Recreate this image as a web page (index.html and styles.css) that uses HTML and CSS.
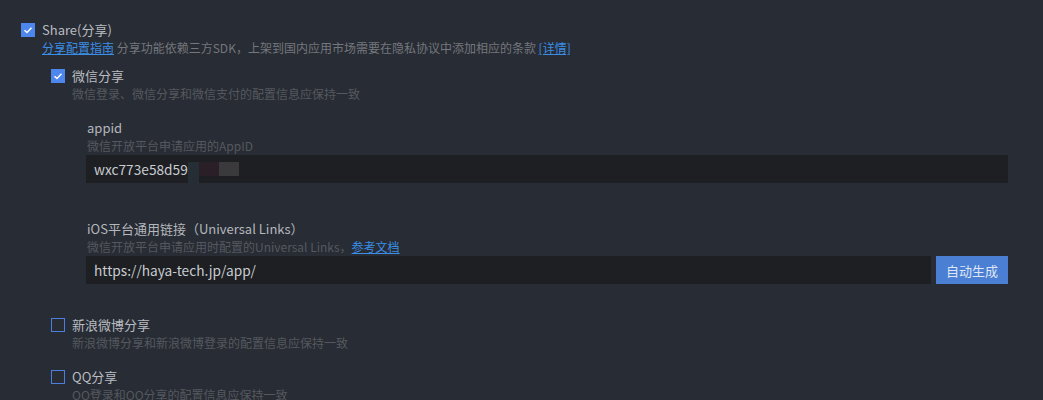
FILE: index.html
```html
<!DOCTYPE html>
<html lang="zh">
<head>
<meta charset="utf-8">
<link rel="stylesheet" href="styles.css">
</head>
<body>
<div class="page">
  <div class="check-row">
    <span class="cb checked"><svg viewBox="0 0 14 14" width="14" height="14"><path d="M3.5 7.2 L6 9.5 L10.5 4.8" fill="none" stroke="#fff" stroke-width="1.5"/></svg></span>
    <span class="label">Share(分享)</span>
  </div>
  <div class="subline"><a class="link">分享配置指南</a> <span class="note">分享功能依赖三方SDK，上架到国内应用市场需要在隐私协议中添加相应的条款</span> <a class="link">[详情]</a></div>

  <div class="group">
    <div class="check-row">
      <span class="cb checked"><svg viewBox="0 0 14 14" width="14" height="14"><path d="M3.5 7.2 L6 9.5 L10.5 4.8" fill="none" stroke="#fff" stroke-width="1.5"/></svg></span>
      <span class="label">微信分享</span>
    </div>
    <div class="desc indent">微信登录、微信分享和微信支付的配置信息应保持一致</div>

    <div class="fields">
      <div class="field">
        <div class="flabel">appid</div>
        <div class="desc">微信开放平台申请应用的AppID</div>
        <div class="input-row">
          <div class="input"><span>wxc773e58d59</span><span class="mask"><i class="m1"></i><i class="m2"></i><i class="m3"></i></span></div>
        </div>
      </div>
      <div class="field field2">
        <div class="flabel">iOS平台通用链接（Universal Links）</div>
        <div class="desc">微信开放平台申请应用时配置的Universal Links，<a class="link">参考文档</a></div>
        <div class="input-row">
          <div class="input">https://haya-tech.jp/app/</div>
          <button class="btn">自动生成</button>
        </div>
      </div>
    </div>

    <div class="check-row weibo">
      <span class="cb"></span>
      <span class="label">新浪微博分享</span>
    </div>
    <div class="desc indent">新浪微博分享和新浪微博登录的配置信息应保持一致</div>

    <div class="check-row qq">
      <span class="cb"></span>
      <span class="label">QQ分享</span>
    </div>
    <div class="desc indent">QQ登录和QQ分享的配置信息应保持一致</div>
  </div>
</div>
</body>
</html>
```
FILE: styles.css
```css
* { box-sizing: border-box; }
html, body { margin: 0; padding: 0; }
body {
  background: #282c34;
  font-family: "Noto Sans CJK SC", "Noto Sans", sans-serif;
  color: #b4b7bd;
  height: 400px;
  overflow: hidden;
}
.page {
  padding: 21px 35px 0 21px;
}
.check-row {
  display: flex;
  align-items: center;
  height: 18px;
  gap: 7px;
}
.cb {
  width: 14px;
  height: 14px;
  border: 1.5px solid #4a7fe0;
  display: inline-flex;
  flex: none;
}
.cb.checked {
  background: #4d86ec;
  border: none;
}
.label {
  font-size: 13px;
  line-height: 18px;
  color: #b9bcc1;
}
.subline {
  margin-left: 21px;
  font-size: 12px;
  line-height: 18px;
  white-space: nowrap;
}
.link {
  color: #3a8ee6;
  text-decoration: underline;
  cursor: pointer;
}
.note {
  color: #74777d;
}
.group {
  margin-left: 30px;
  margin-top: 10px;
}
.desc {
  font-size: 12px;
  line-height: 18px;
  color: #55595f;
  white-space: nowrap;
}
.desc.indent {
  margin-left: 21px;
}
.fields {
  margin-left: 35px;
  margin-top: 16px;
}
.flabel {
  font-size: 13px;
  line-height: 18px;
  color: #b4b7bd;
  padding-left: 1px;
}
.field .desc { padding-left: 1px; }
.field2 { margin-top: 37px; }
.input-row {
  display: flex;
  gap: 5px;
}
.input {
  flex: 1;
  height: 28px;
  background: #1d1f23;
  color: #c8cbd0;
  font-size: 13.7px;
  line-height: 28px;
  padding-left: 8px;
  display: flex;
  align-items: stretch;
}
.mask {
  display: flex;
  align-items: flex-start;
  height: 28px;
}
.mask i { display: block; height: 14px; margin-top: 7px; }
.mask .m1 { width: 11px; height: 21px; background: #252d35; }
.mask .m2 { width: 20px; background: #2a1f26; }
.mask .m3 { width: 20px; background: #3a3a3d; }
.btn {
  width: 72px;
  height: 28px;
  background: #4b7fd3;
  color: #dfe6f3;
  border: none;
  font-family: inherit;
  font-size: 13px;
  padding: 0;
}
.weibo { margin-top: 32px; }
.qq { margin-top: 16px; }
```
